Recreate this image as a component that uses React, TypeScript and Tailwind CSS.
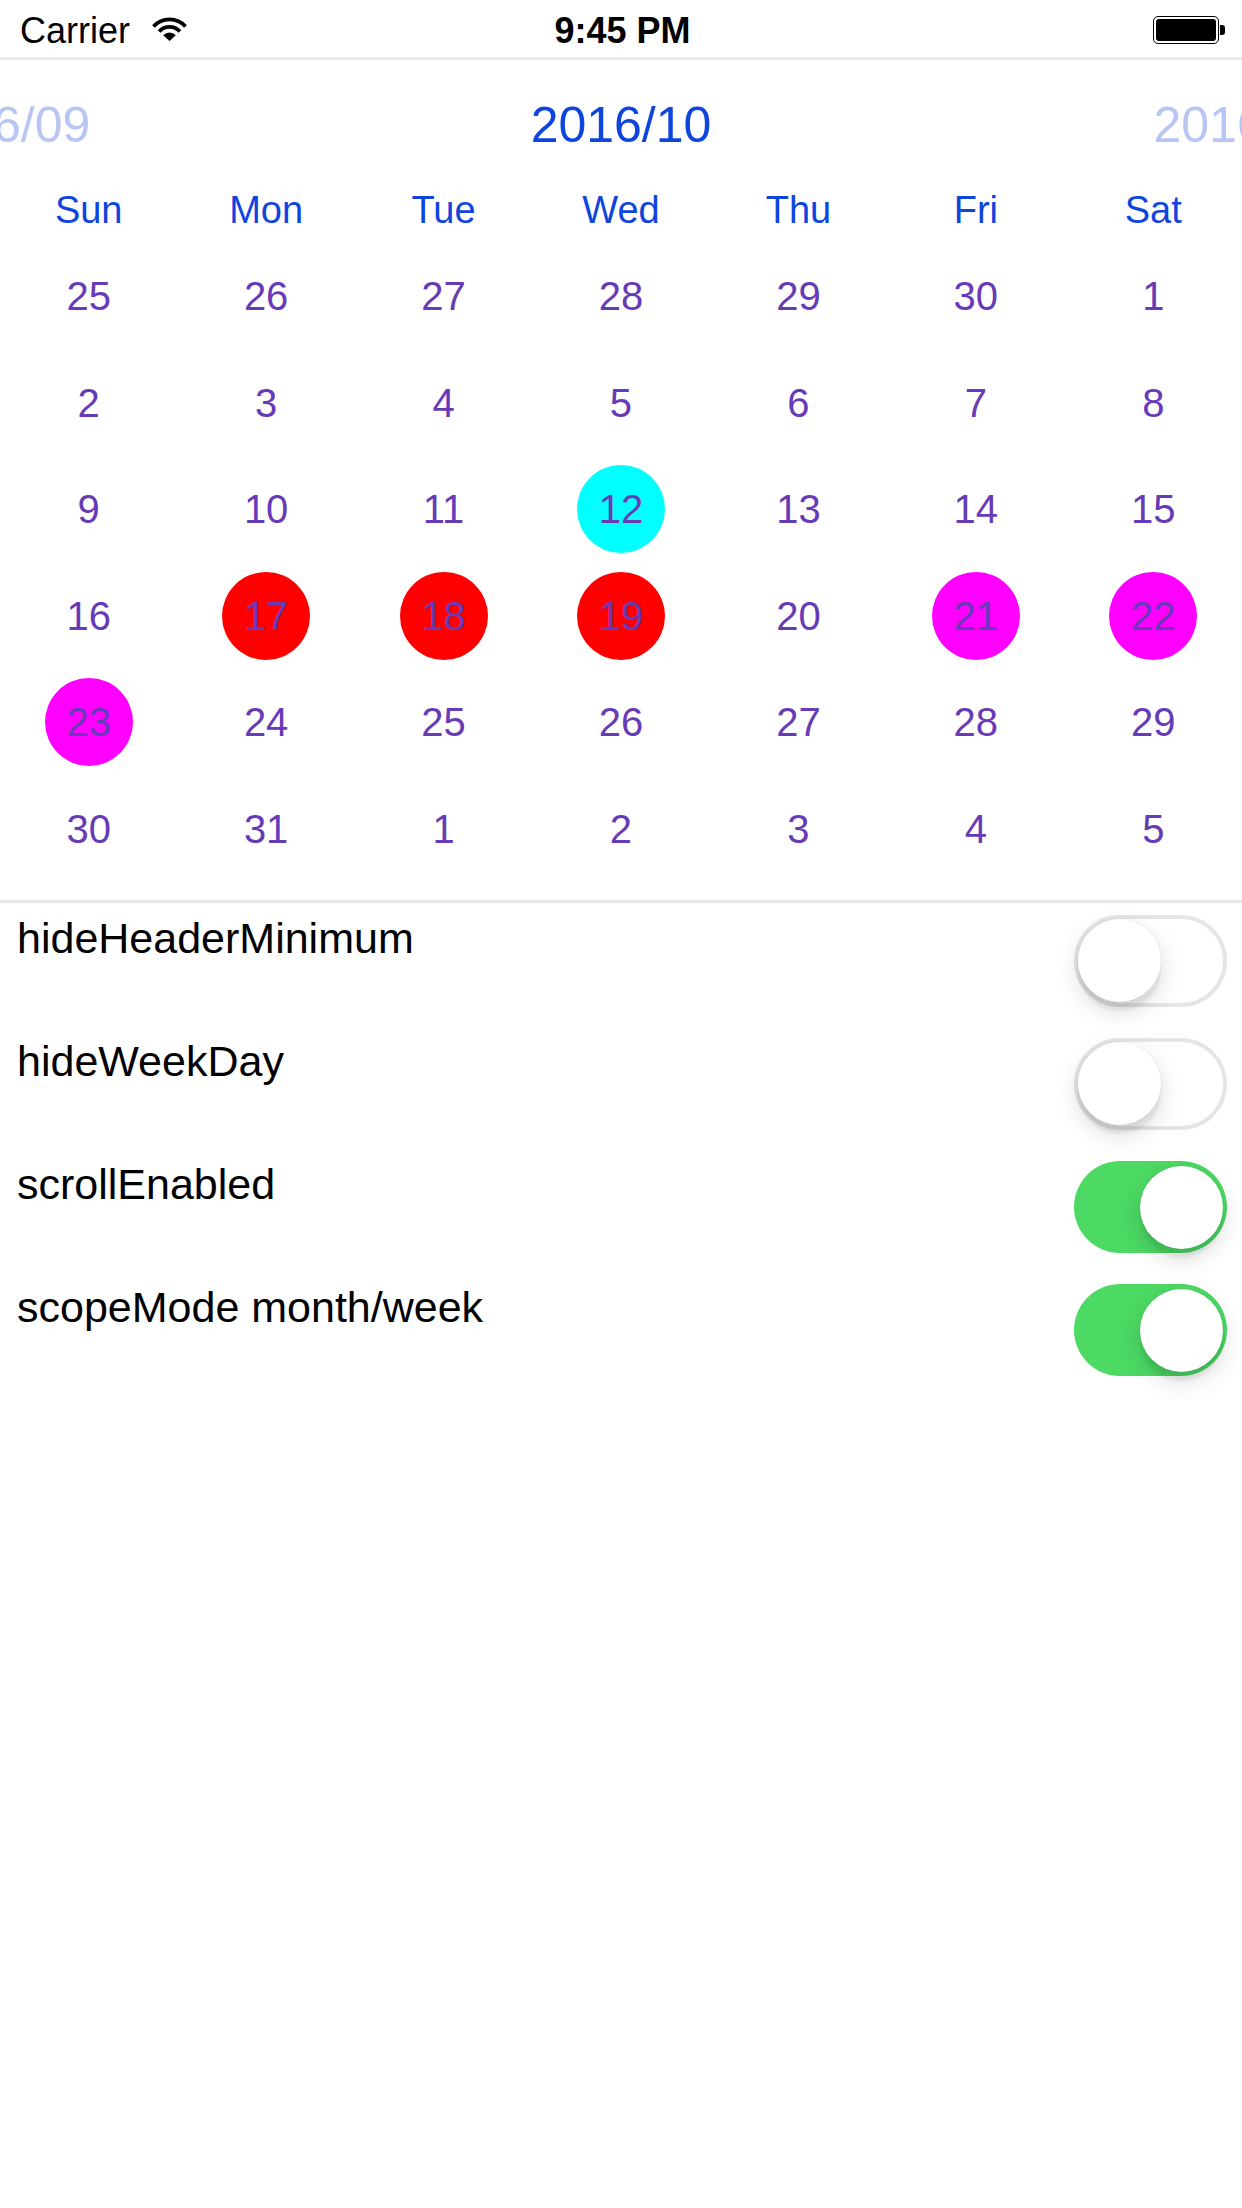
import { useState } from "react";

const WEEKDAYS = ["Sun", "Mon", "Tue", "Wed", "Thu", "Fri", "Sat"];

const DAYS = [
  25, 26, 27, 28, 29, 30, 1,
  2, 3, 4, 5, 6, 7, 8,
  9, 10, 11, 12, 13, 14, 15,
  16, 17, 18, 19, 20, 21, 22,
  23, 24, 25, 26, 27, 28, 29,
  30, 31, 1, 2, 3, 4, 5,
];

// index in DAYS -> fill colour of the circle
const MARKS: Record<number, string> = {
  17: "bg-[#00ffff]",
  22: "bg-[#ff0000]",
  23: "bg-[#ff0000]",
  24: "bg-[#ff0000]",
  26: "bg-[#ff00ff]",
  27: "bg-[#ff00ff]",
  28: "bg-[#ff00ff]",
};

const StatusBar = () => (
  <div className="h-[60px] border-b-[3px] border-[#ebebeb] flex items-center justify-between pl-[20px] pr-[17px] pt-[5px] text-black font-['Liberation_Sans',sans-serif]">
    <div className="flex items-center w-[300px]">
      <span className="text-[36px] leading-none">Carrier</span>
      <svg className="ml-[22px] -mt-[4px]" width="35" height="24" viewBox="0 0 35 24">
        <path d="M1.5 9.6 A21.5 21.5 0 0 1 33.5 9.6" fill="none" stroke="black" strokeWidth="3.8" />
        <path d="M7.1 14.6 A14 14 0 0 1 27.9 14.6" fill="none" stroke="black" strokeWidth="3.8" />
        <path d="M17.5 24 L11.2 18.3 A8.5 8.5 0 0 1 23.8 18.3 Z" fill="black" />
      </svg>
    </div>
    <span className="text-[36px] leading-none font-semibold">9:45 PM</span>
    <div className="w-[300px] flex justify-end items-center -mt-[2px]">
      <div className="w-[66px] h-[28px] rounded-[5px] border-[1.5px] border-black p-[2px]">
        <div className="w-full h-full bg-black rounded-[3px]" />
      </div>
      <div className="w-[5px] h-[10px] bg-black rounded-r-[3px] ml-[1px]" />
    </div>
  </div>
);

const Switch = ({ on, onToggle }: { on: boolean; onToggle: () => void }) => (
  <button
    onClick={onToggle}
    className={`relative w-[153px] h-[92px] rounded-full shrink-0 transition-colors ${
      on ? "bg-[#4cd964]" : "bg-white border-[4.5px] border-[#e5e5e5]"
    }`}
  >
    <span
      className={`absolute w-[83px] h-[83px] rounded-full bg-white shadow-[0_9px_24px_rgba(0,0,0,0.15),0_9px_3px_rgba(0,0,0,0.06),0_0_0_1px_rgba(0,0,0,0.03)] ${
        on ? "top-[4.5px] right-[4.5px]" : "top-0 left-0"
      }`}
    />
  </button>
);

export default function App() {
  const [opts, setOpts] = useState({
    hideHeaderMinimum: false,
    hideWeekDay: false,
    scrollEnabled: true,
    scopeMode: true,
  });

  const rows: { key: keyof typeof opts; label: string }[] = [
    { key: "hideHeaderMinimum", label: "hideHeaderMinimum" },
    { key: "hideWeekDay", label: "hideWeekDay" },
    { key: "scrollEnabled", label: "scrollEnabled" },
    { key: "scopeMode", label: "scopeMode month/week" },
  ];

  return (
    <div className="w-[1242px] min-h-[2208px] bg-white overflow-hidden font-['Liberation_Sans',sans-serif]">
      <StatusBar />

      {/* month header, prev / next peek in at the edges */}
      <div className="h-[130px] flex items-center ml-[-310.5px] overflow-visible">
        <div className="w-[621px] shrink-0 text-center text-[50px] leading-none text-[#b7c6f4]">2016/09</div>
        <div className="w-[621px] shrink-0 text-center text-[50px] leading-none text-[#0e45dd]">2016/10</div>
        <div className="w-[621px] shrink-0 text-center text-[50px] leading-none text-[#b7c6f4]">2016/11</div>
      </div>

      <div className="grid grid-cols-7 h-[40px] items-center">
        {WEEKDAYS.map((d) => (
          <div key={d} className="text-center text-[38px] leading-none text-[#0e45dd]">
            {d}
          </div>
        ))}
      </div>

      <div className="grid grid-cols-7 mt-[13px]">
        {DAYS.map((d, i) => (
          <div key={i} className="h-[106.5px] flex items-center justify-center">
            <div
              className={`w-[88px] h-[88px] rounded-full flex items-center justify-center text-[40px] leading-none text-[#673ab7] ${
                MARKS[i] ?? ""
              }`}
            >
              {d}
            </div>
          </div>
        ))}
      </div>

      <div className="mt-[18px] h-[3px] bg-[#e8e8e8]" />

      <div>
        {rows.map((r) => (
          <div key={r.key} className="h-[123px] flex items-start justify-between pl-[17px] pr-[15px] pt-[12px]">
            <span className="text-[43px] leading-[46px] text-black">{r.label}</span>
            <Switch on={opts[r.key]} onToggle={() => setOpts({ ...opts, [r.key]: !opts[r.key] })} />
          </div>
        ))}
      </div>
    </div>
  );
}
